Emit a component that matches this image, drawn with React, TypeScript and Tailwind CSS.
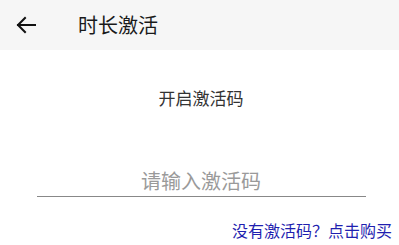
import React from 'react'

const font = "font-['Noto_Sans_CJK_SC','Noto_Sans',sans-serif]"

const ActivationPage = () => {
  return (
    <div className={`w-[399px] h-[245px] bg-white ${font}`}>
      <div className="h-[50px] bg-[#f6f6f6] flex items-center">
        <button className="ml-[15px] w-[23px] h-[23px] flex items-center justify-center" aria-label="Back">
          <svg width="21" height="18" viewBox="0 0 21 18" fill="none" stroke="#111" strokeWidth="2" strokeLinecap="square">
            <path d="M2 9h17" />
            <path d="M9 2L2 9l7 7" />
          </svg>
        </button>
        <h1 className="ml-[40px] text-[20px] leading-none text-[#1a1a1a]">时长激活</h1>
      </div>

      <div className="flex flex-col items-center pt-[39px]">
        <p className="text-[17px] leading-none text-[#333] pl-[3px]">开启激活码</p>
        <div className="mt-[63px] w-[329px] ml-[3px] border-b border-[#888] pb-[3px] flex justify-center">
          <input
            className="w-full text-center text-[20px] leading-[24px] bg-transparent outline-none placeholder:text-[#9a9a9a]"
            placeholder="请输入激活码"
          />
        </div>
        <div className="self-end pr-[7px] mt-[21px]">
          <a className="text-[16px] leading-none text-[#1f1fb0]">没有激活码？点击购买</a>
        </div>
      </div>
    </div>
  )
}

export default function App() {
  return <ActivationPage />
}
